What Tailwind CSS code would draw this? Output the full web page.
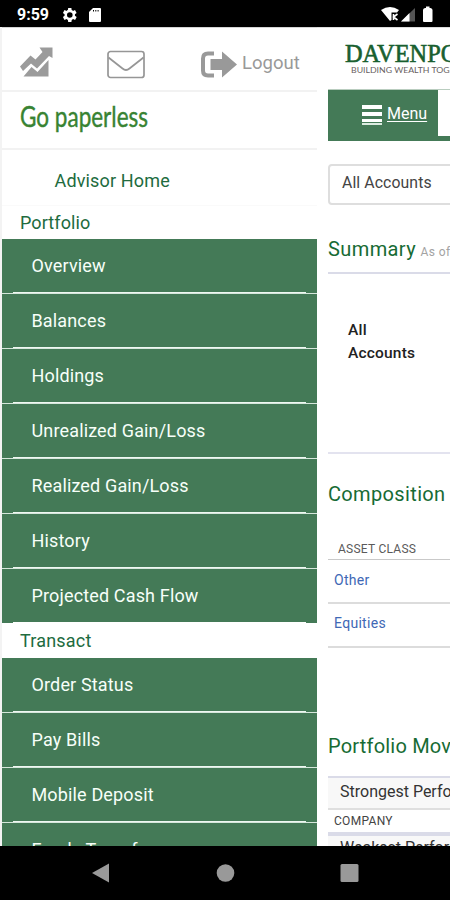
<!DOCTYPE html>
<html lang="en">
<head>
<meta charset="utf-8">
<title>Davenport</title>
<script src="https://cdn.jsdelivr.net/npm/@tailwindcss/browser@4"></script>
</head>
<body class="w-[450px] h-[900px] overflow-hidden bg-white font-[Roboto,sans-serif] flex flex-col whitespace-nowrap">
<header class="h-[27px] shrink-0 bg-black text-white flex items-center pl-[17px] pr-[16px]">
  <span class="text-[16px] font-bold w-[44px] pt-[3px] leading-5">9:59</span>
  <svg class="w-[16px] h-[16px] mt-[2px]" viewBox="2 2 20 20" fill="white"><path d="M19.4 13a7.5 7.5 0 0 0 0-2l2.1-1.6-2-3.5-2.5 1a7 7 0 0 0-1.7-1L15 3.200h-4l-.4 2.700a7 7 0 0 0-1.700 1l-2.500-1-2 3.500L6.500 11a7.500 7.500 0 0 0 0 2l-2.100 1.600 2 3.500 2.500-1a7 7 0 0 0 1.700 1l.4 2.700h4l.4-2.700a7 7 0 0 0 1.700-1l2.500 1 2-3.500zM13 15.500a3.500 3.500 0 1 1 0-7 3.500 3.500 0 0 1 0 7z"/></svg>
  <svg class="w-[12px] h-[14px] ml-[12px] mt-[2px]" viewBox="0 0 12 14" fill="white"><path d="M4 0h7q1 0 1 1v12q0 1-1 1H1q-1 0-1-1V4zM4 2v1.500h1V2zM6.300 2v1.500h1V2zM8.600 2v1.500h1V2z" fill-rule="evenodd"/></svg>
  <span class="flex-1"></span>
  <svg class="w-[54px] h-[17px] mt-[2px]" viewBox="0 0 54 17"><path d="M1 4Q10-2 19 4L17 6.500h-5.500V14L10 15z" fill="white"/><path d="M13.500 8v6M17.500 8l-4 3 4 3" stroke="white" stroke-width="1.600" fill="none"/><path d="M21 15.500L35 2v13.500z" fill="#555"/><path d="M21 15.500L29.500 7v8.500z" fill="white"/><path d="M46 0.500h3.500v1.500h1q2 .5 2 2V15q0 1-1 1h-7.500q-1 0-1-1V4q0-1.500 2-2h1z" fill="white"/></svg>
</header>
<main class="h-[819px] shrink-0 flex overflow-hidden">
  <nav class="w-[317px] shrink-0 border-l-2 border-[#f3f3f3] text-[18px] text-[#216b3e]">
    <div class="h-[65px] border-b-2 border-b-[#f2f2f2] border-t border-t-[#d5d5d5] flex items-center text-[#999] pl-[17px]">
      <svg class="w-[34px] h-[32px] mt-[5px]" viewBox="0 0 34 32" fill="#9b9b9b"><path d="M1 20.500L11.500 9.500l5 4L23.500 6l-3-4.500H33.500V12l-3.500-2L18 22.500l-6-5L4 25zM4.500 30.500L12.500 21l6 5L29.500 14v16.500z"/></svg>
      <svg class="w-[38px] h-[29px] ml-[54px] mt-[10px]" viewBox="0 0 38 29" fill="none" stroke="#969696" stroke-width="1.700"><rect x="1" y="1.500" width="36" height="26" rx="2.500"/><path d="M1.500 7.500L15.500 18.500Q19 21.500 22.500 18.500L36.500 7.500"/></svg>
      <svg class="w-[37px] h-[29px] ml-[55px] mt-[10px]" viewBox="0 0 37 29"><path d="M14 3.500H8Q3 3.500 3 8.500v12q0 5 5 5h6" fill="none" stroke="#999" stroke-width="4"/><path d="M10.500 9H22V1.500l15 13L22 27.500V20H10.500z" fill="#999"/></svg>
      <span class="ml-[5px] mt-[9px] text-[18.500px]">Logout</span>
    </div>
    <div class="h-[58px] border-b-2 border-[#f2f2f2] pl-[18px] pt-[7px]">
      <svg class="w-[132px] h-[40px]" viewBox="0 0 132 40"><text x="0" y="27.500" font-family="Lato" font-size="28" textLength="128" lengthAdjust="spacingAndGlyphs" fill="#388332" stroke="#388332" stroke-width=".4">Go paperless</text></svg>
    </div>
    <div class="h-[56px] border-b border-[#fafafa] pl-[52.500px] pt-[4px] leading-[54px] tracking-[0.15px]">Advisor Home</div>
    <h2 class="h-[33px] pl-[18px] leading-[33px] tracking-[0.1px]">Portfolio</h2>
    <ul class="bg-[#447a57] text-[#f7fff9] tracking-[0.15px]">
      <li class="h-[55px] border-b border-[#d6e7dc] flex flex-col"><a class="h-[53px] pl-[29.500px] leading-[53px]">Overview</a><i class="h-px bg-[#eff8f2] mx-[11px]"></i></li>
      <li class="h-[55px] border-b border-[#d6e7dc] flex flex-col"><a class="h-[53px] pl-[29.500px] leading-[53px]">Balances</a><i class="h-px bg-[#eff8f2] mx-[11px]"></i></li>
      <li class="h-[55px] border-b border-[#d6e7dc] flex flex-col"><a class="h-[53px] pl-[29.500px] leading-[53px]">Holdings</a><i class="h-px bg-[#eff8f2] mx-[11px]"></i></li>
      <li class="h-[55px] border-b border-[#d6e7dc] flex flex-col"><a class="h-[53px] pl-[29.500px] leading-[53px]">Unrealized Gain/Loss</a><i class="h-px bg-[#eff8f2] mx-[11px]"></i></li>
      <li class="h-[55px] border-b border-[#d6e7dc] flex flex-col"><a class="h-[53px] pl-[29.500px] leading-[53px]">Realized Gain/Loss</a><i class="h-px bg-[#eff8f2] mx-[11px]"></i></li>
      <li class="h-[55px] border-b border-[#d6e7dc] flex flex-col"><a class="h-[53px] pl-[29.500px] leading-[53px]">History</a><i class="h-px bg-[#eff8f2] mx-[11px]"></i></li>
      <li class="h-[55px] border-b border-white flex flex-col"><a class="h-[53px] pl-[29.500px] leading-[53px]">Projected Cash Flow</a><i class="h-px bg-white mx-[11px]"></i></li>
    </ul>
    <h2 class="h-[34px] pl-[18px] leading-[33px] tracking-[0.2px]">Transact</h2>
    <ul class="bg-[#447a57] text-[#f7fff9] tracking-[0.15px]">
      <li class="h-[55px] border-b border-[#d6e7dc] flex flex-col"><a class="h-[53px] pl-[29.500px] leading-[53px]">Order Status</a><i class="h-px bg-[#eff8f2] mx-[11px]"></i></li>
      <li class="h-[55px] border-b border-[#d6e7dc] flex flex-col"><a class="h-[53px] pl-[29.500px] leading-[53px]">Pay Bills</a><i class="h-px bg-[#eff8f2] mx-[11px]"></i></li>
      <li class="h-[55px] border-b border-[#d6e7dc] flex flex-col"><a class="h-[53px] pl-[29.500px] leading-[53px]">Mobile Deposit</a><i class="h-px bg-[#eff8f2] mx-[11px]"></i></li>
      <li class="h-[55px] pl-[29.500px] leading-[53px]">Funds Transfer</li>
    </ul>
  </nav>
  <section class="w-[133px] pl-[11px] overflow-hidden border-t border-[#ddd]">
    <div class="h-[61px]">
      <svg class="w-[122px] h-[61px]" viewBox="0 0 122 61"><text x="17" y="33.500" font-family="Liberation Serif" font-size="25" textLength="143" lengthAdjust="spacingAndGlyphs" fill="#195f30" stroke="#195f30" stroke-width=".6">DAVENPORT</text><text x="23" y="44.500" font-family="Lato" font-size="7.800" textLength="126" lengthAdjust="spacingAndGlyphs" fill="#686060">BUILDING WEALTH TOGETHER</text></svg>
    </div>
    <div class="h-[52px] bg-[#447a57] border-t border-[#b9cdbf] flex">
      <div class="w-[110px] flex text-white pl-[34px] pt-[15px]">
        <div class="w-[20px] flex flex-col gap-[3px]"><i class="h-[4px] bg-white"></i><i class="h-[4px] bg-white"></i><i class="h-[3px] bg-white"></i><i class="h-[2px] bg-[#dcebe0] -mt-[2px]"></i></div>
        <a class="ml-[5px] mt-[-3px] text-[16px] leading-[23px] underline underline-offset-2">Menu</a>
      </div>
      <div class="flex-1 h-[46px] bg-white"></div>
    </div>
    <div class="mt-[23px] w-[200px] h-[41px] border-2 border-[#dedede] rounded-[4px] pl-[12px] leading-[33px] text-[15.800px] text-[#444] tracking-[0.1px]">All Accounts</div>
    <div class="h-[69px] border-b-2 border-[#dadbe8] pt-[32px] text-[20px] leading-[24px] text-[#176b34] tracking-[0.4px]">Summary <span class="text-[12px] text-[#a3a3a3] ml-[-1px] tracking-[0.4px]">As of</span></div>
    <div class="h-[180px] border-b-2 border-[#e3e3ef] pl-[20px] pt-[45px] text-[15.500px] leading-[23px] font-medium text-[#222] tracking-[0.2px]">All<br>Accounts</div>
    <h2 class="h-[88px] pt-[28px] text-[20px] leading-[24px] text-[#176b34] tracking-[0.35px]">Composition</h2>
    <div class="h-[18px] border-b border-[#c9c9c9] pl-[10px] leading-[15px] text-[12px] text-[#5a5a5a] tracking-[0.25px]">ASSET CLASS</div>
    <div class="h-[44px] border-b-2 border-[#dcdcdc] pl-[6px] leading-[41px] text-[14px] text-[#4068b5] tracking-[0.3px]">Other</div>
    <div class="h-[44px] border-b-2 border-[#dcdcdc] pl-[6px] leading-[39px] text-[14px] text-[#4068b5] tracking-[0.3px]">Equities</div>
    <h2 class="h-[128px] pt-[86px] text-[20px] leading-[24px] text-[#176b34] tracking-[0.2px]">Portfolio Movers</h2>
    <div class="h-[34px] bg-[#f8f8f8] border-t-2 border-t-[#dadbe8] border-b-2 border-b-[#dfdfdf] pl-[12px] leading-[27px] text-[16px] text-[#333]">Strongest Performers</div>
    <div class="h-[26px] border-b-4 border-[#dadbe8] pl-[6px] leading-[23px] text-[12px] text-[#444] tracking-[0.3px]">COMPANY</div>
    <div class="bg-[#f8f8f8] pl-[12px] leading-[23px] text-[16px] text-[#333]">Weakest Performers</div>
  </section>
</main>
<footer class="h-[54px] shrink-0 bg-black flex items-center pl-[91px]">
  <svg class="w-[270px] h-[24px]" viewBox="0 0 270 24" fill="#999"><path d="M1 12L18 2.500v19z"/><circle cx="134.500" cy="12" r="8.800"/><rect x="249.500" y="3" width="18" height="18" rx="1.500"/></svg>
</footer>
</body>
</html>
